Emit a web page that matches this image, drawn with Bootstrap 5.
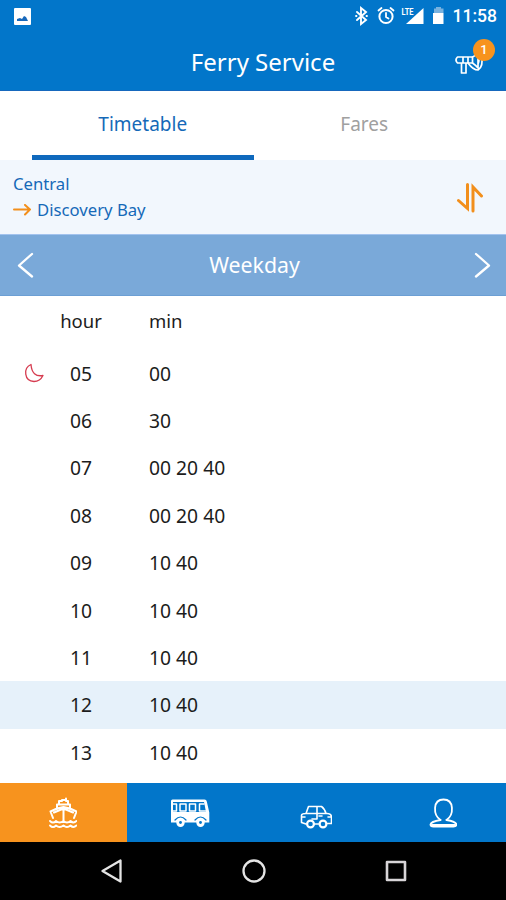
<!DOCTYPE html>
<html lang="en">
<head>
<meta charset="utf-8">
<meta name="viewport" content="width=device-width, initial-scale=1">
<title>Ferry Service</title>
<link href="https://cdn.jsdelivr.net/npm/bootstrap@5.3.0/dist/css/bootstrap.min.css" rel="stylesheet">
<style>
  body { font-family: "Noto Sans", "Open Sans", sans-serif; height: 900px; overflow: hidden; line-height: 1.2; color: #1c1c1c; }
  svg { display: block; fill: none; stroke-linecap: round; stroke-linejoin: round; }
  .brand-bg { background: #0276ca; }
  .status-bar { height: 32px; padding: 0 9px 0 14px; }
  .clock { font: 500 17.5px/32px Roboto, sans-serif; padding-left: 6px; }
  .title-bar { height: 59px; border-bottom: 1px solid #1668bd; }
  .title-bar h1 { font-size: 24px; font-weight: 400; padding: 2px 0 0 20px; }
  .alerts { width: 42px; height: 42px; right: 10px; top: 5px; }
  .alerts .count { width: 22px; height: 22px; right: 1px; top: 2px; background: #f7931e; font: 500 13px/22px Roboto, sans-serif; }
  .tabs { height: 69px; padding: 0 31px 0 32px; }
  .tabs .nav-link { font-size: 19px; padding: 3px 0 0; color: #a0a0a0; border-bottom: 5px solid transparent; border-radius: 0; }
  .tabs .nav-link.active { color: #1569b8; border-color: #0f69bd; }
  .route { height: 75px; background: #f2f7fd; padding: 1px 22px 0 13px; border-bottom: 1px solid #a3c3ee; color: #1569b8; font-size: 16.7px; }
  .route-line { height: 26px; }
  .day { height: 61px; background: #7aa9d9; padding: 0 14px 0 17px; font-size: 21.3px; border-bottom: 1px solid #6c9fd4; }
  .time-row { height: 47.4px; font-size: 19.3px; }
  .time-row.labels { height: 53.6px; padding-bottom: 3px; font-size: 18.5px; }
  .time-row.current { background: #e6f1fa; }
  .mark-col { width: 49px; padding-left: 24px; }
  .hour-col { width: 64px; }
  .min-col { padding-left: 36px; }
  .bottom-nav { height: 59px; }
  .bottom-nav .on { background: #f7931e; }
  .sys-nav { height: 58px; padding: 0 98px 0 101px; }
</style>
<script src="https://cdn.jsdelivr.net/npm/bootstrap@5.3.0/dist/js/bootstrap.bundle.min.js"></script>
</head>
<body class="d-flex flex-column bg-white">
<header class="brand-bg text-white flex-shrink-0">
  <div class="status-bar d-flex align-items-center justify-content-between">
    <svg width="17" height="17" viewBox="0 0 17 17"><rect width="17" height="17" rx="1" fill="#fff"/><path d="M3 13V11l3-1 2 1 2-3 2 1 2 4z" fill="#1768bb"/></svg>
    <div class="d-flex align-items-center">
      <svg width="92" height="20" viewBox="0 0 92 20" stroke="#fff">
        <path d="M2 6l9 8-5 4V2l5 4-9 8" stroke-width="1.9" stroke-linejoin="miter"/>
        <path d="M1 10h.5M11.500 10h.5" stroke-width="1.8"/>
        <circle cx="31" cy="10.500" r="6.600" stroke-width="2"/>
        <path d="M31 7v4l2.500 1.500M23.500 4.500l3-2.500M38.500 4.500l-3-2.500" stroke-width="1.800"/>
        <path d="M68.500 2V18H51z" fill="#fff" stroke="none"/>
        <path d="M79 2.500h2V1h5v1.500h2.500V7H79z" fill="#78b2df" stroke="none"/>
        <path d="M78 7h10.500v11H78z" fill="#fff" stroke="none"/>
        <text x="46.500" y="8.500" font-family="Roboto, sans-serif" font-size="9.500" font-weight="700" fill="#fff" stroke="none" textLength="12" lengthAdjust="spacingAndGlyphs">LTE</text>
      </svg>
      <span class="clock">11:58</span>
    </div>
  </div>
  <div class="title-bar position-relative d-flex align-items-center justify-content-center">
    <h1 class="m-0">Ferry Service</h1>
    <div class="alerts position-absolute">
      <svg width="42" height="42" viewBox="0 0 42 42" stroke="#fff" stroke-width="1.700">
        <path d="M3.500 20h15v6h-15q-3-3 0-6zM9 20v6M14 20v6M7.500 26v10h4.500V26"/>
        <path d="M18.500 20q3-1 5.500-5v16q-2.500-3-5.500-5M14 26q5 7 10 7 6-4 3-14M24 19q2 4 0 8"/>
      </svg>
      <span class="count position-absolute rounded-circle text-center">1</span>
    </div>
  </div>
</header>
<nav class="tabs nav nav-justified flex-nowrap flex-shrink-0">
  <a class="nav-link active d-flex align-items-center justify-content-center" href="#">Timetable</a>
  <a class="nav-link d-flex align-items-center justify-content-center" href="#">Fares</a>
</nav>
<section class="route d-flex align-items-center justify-content-between flex-shrink-0">
  <div>
    <div class="route-line d-flex align-items-center">Central</div>
    <div class="route-line d-flex align-items-center">
      <svg class="me-1" width="20" height="14" viewBox="0 0 20 14" stroke="#f28f1c" stroke-width="2"><path d="M1 5.500h16M12 .9l5 4.600-5 5"/></svg>Discovery Bay
    </div>
  </div>
  <svg width="27" height="30" viewBox="0 0 27 30" stroke="#f28f1c" stroke-width="3" stroke-linecap="butt"><path d="M10.500 1.500v24L1.500 17.500M16 28V4l8.500 9" stroke-linejoin="miter"/></svg>
</section>
<section class="day d-flex align-items-center justify-content-between text-white flex-shrink-0">
  <svg width="18" height="28" viewBox="0 0 18 28" stroke="#fff" stroke-width="2.300"><path d="M15 3L2 14.500 15 25.500"/></svg>
  <span>Weekday</span>
  <svg width="18" height="28" viewBox="0 0 18 28" stroke="#fff" stroke-width="2.300"><path d="M2 3l13 11.500L2 25.500"/></svg>
</section>
<main class="flex-grow-1 overflow-hidden">
  <div class="time-row labels d-flex align-items-center"><div class="mark-col"></div><div class="hour-col text-center">hour</div><div class="min-col">min</div></div>
  <div class="time-row d-flex align-items-center">
    <div class="mark-col"><svg width="20" height="20" viewBox="0 0 20 20" stroke="#d63c50" stroke-width="1.300"><path d="M7 1.500C-1 5 0 18 10 18.500q6 0 9-6Q8 14.500 7 1.500z"/></svg></div>
    <div class="hour-col text-center">05</div><div class="min-col">00</div>
  </div>
  <div class="time-row d-flex align-items-center"><div class="mark-col"></div><div class="hour-col text-center">06</div><div class="min-col">30</div></div>
  <div class="time-row d-flex align-items-center"><div class="mark-col"></div><div class="hour-col text-center">07</div><div class="min-col">00 20 40</div></div>
  <div class="time-row d-flex align-items-center"><div class="mark-col"></div><div class="hour-col text-center">08</div><div class="min-col">00 20 40</div></div>
  <div class="time-row d-flex align-items-center"><div class="mark-col"></div><div class="hour-col text-center">09</div><div class="min-col">10 40</div></div>
  <div class="time-row d-flex align-items-center"><div class="mark-col"></div><div class="hour-col text-center">10</div><div class="min-col">10 40</div></div>
  <div class="time-row d-flex align-items-center"><div class="mark-col"></div><div class="hour-col text-center">11</div><div class="min-col">10 40</div></div>
  <div class="time-row current d-flex align-items-center"><div class="mark-col"></div><div class="hour-col text-center">12</div><div class="min-col">10 40</div></div>
  <div class="time-row d-flex align-items-center"><div class="mark-col"></div><div class="hour-col text-center">13</div><div class="min-col">10 40</div></div>
</main>
<nav class="bottom-nav brand-bg row g-0 flex-shrink-0">
  <a class="on col d-flex align-items-center justify-content-center" href="#" aria-label="Ferry">
    <svg width="28" height="32" viewBox="0 0 28 32" stroke="#fff" stroke-width="2">
      <path d="M10 7V4h3V3h4V1.500M17 4h2v3M8 12V7.500h13V12M4 21L1.500 14.500 8 11.500l6.500-1.500L21 11.500l6.500 3L25 21M5 15.500l9.500-4 9.500 4M14.500 11.500V23"/>
      <path d="M1 24q3 3 6 0 3.500 3 7.500 0 3.500 3 7 0 3 3 6 0M1 28.500q3 3 6 0 3.500 3 7.500 0 3.500 3 7 0 3 3 6 0" stroke-width="1.900"/>
    </svg>
  </a>
  <a class="col d-flex align-items-center justify-content-center" href="#" aria-label="Bus">
    <svg width="40" height="30" viewBox="0 0 40 30" stroke="#fff">
      <path d="M2.500 1.500h32q2 0 2.300 2l2.500 11v10H1V3q0-1.500 1.500-1.500z" fill="#fff" stroke="none"/>
      <path d="M3 4h31l2 10H3z" fill="#0276ca" stroke="none"/>
      <path d="M2.500 6h4v7h-4M10 6h6v7h-6zM19.500 6h6v7h-6zM34 6h-4.500v7H36" stroke-width="1.500"/>
      <path d="M5 22q5.500-6 11 0M25 22q5.500-6 11 0" stroke="#0276ca" stroke-width="1.200"/>
      <circle cx="10.500" cy="24.800" r="4.200" fill="#fff" stroke="none"/><circle cx="30.500" cy="24.800" r="4.200" fill="#fff" stroke="none"/>
      <circle cx="10.500" cy="24.500" r="1.400" fill="#0276ca" stroke="none"/><circle cx="30.500" cy="24.500" r="1.400" fill="#0276ca" stroke="none"/>
    </svg>
  </a>
  <a class="col d-flex align-items-center justify-content-center" href="#" aria-label="Car">
    <svg class="mt-2" width="32" height="24" viewBox="0 0 32 24" stroke="#fff" stroke-width="1.600">
      <path d="M6 8.500L8.500 1.500h13q3 2 4.500 7M6 8.500h21q4.500 0 4.500 4v6h-4M18.500 19h-4M6 19l-4.500-1.500v-7q0-2 4.500-2M17 2v12M17 14h-5M19 11h3M28 12h3M2 12h3"/>
      <circle cx="10.500" cy="19" r="3.400" stroke-width="2.200"/><circle cx="23" cy="19" r="3.400" stroke-width="2.200"/>
    </svg>
  </a>
  <a class="col d-flex align-items-center justify-content-center" href="#" aria-label="Profile">
    <svg width="28" height="30" viewBox="0 0 28 30" stroke="#fff" stroke-width="1.800">
      <path d="M11.500 22C4 17 3.500 1.500 14.500 1.500S25 17 17.500 22"/>
      <path d="M11.500 22Q2 23.500 1.500 26.500q0 2 3 2h20q3 0 3-2Q27 23.500 17.500 22"/><path d="M3 27h23" stroke-width="2.200"/>
    </svg>
  </a>
</nav>
<footer class="sys-nav bg-black d-flex align-items-center justify-content-between flex-shrink-0">
  <svg width="22" height="26" viewBox="0 0 22 26" stroke="#e4e4e4" stroke-width="2.300"><path d="M19.500 2.500v21L1.500 13z"/></svg>
  <svg width="26" height="26" viewBox="0 0 26 26" stroke="#e4e4e4" stroke-width="2.300"><circle cx="13" cy="13" r="10.500"/></svg>
  <svg width="24" height="24" viewBox="0 0 24 24" stroke="#d8d5d8" stroke-width="2.600"><rect x="3" y="3" width="18" height="18"/></svg>
</footer>
</body>
</html>
